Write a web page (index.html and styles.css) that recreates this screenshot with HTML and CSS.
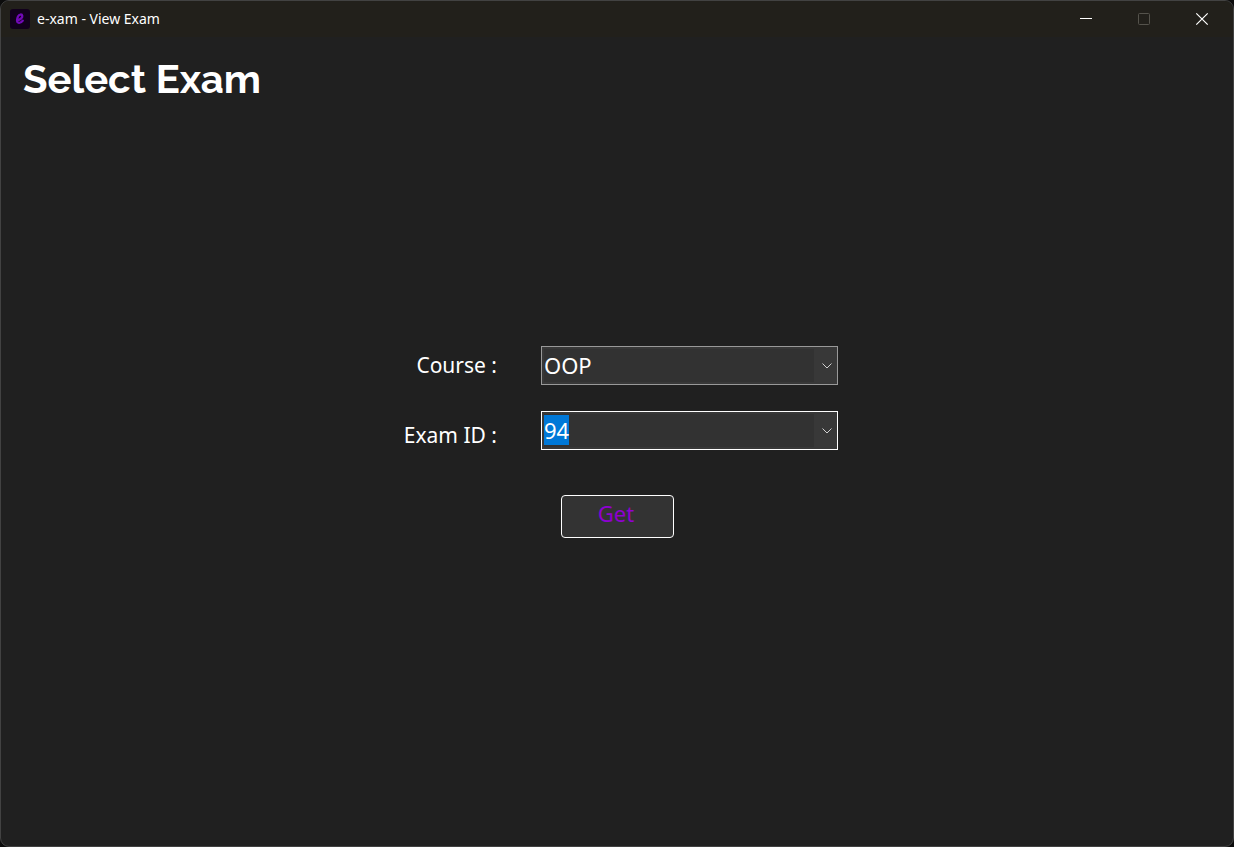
FILE: index.html
```html
<!DOCTYPE html>
<html lang="en">
<head>
<meta charset="utf-8">
<title>e-xam - View Exam</title>
<link rel="stylesheet" href="styles.css">
</head>
<body>
<div class="window">
  <header class="titlebar">
    <svg class="app-icon" viewBox="0 0 20 20" aria-hidden="true">
      <rect width="20" height="20" rx="3" fill="#12001c"/>
      <path d="M7.5 11.2C10 10.8 12.6 8.8 12.3 6.8C12 5 9.2 5 8 7.4C6.7 10 6.4 13.6 9 13.8C10.6 13.9 11.8 13 12.8 11.6" fill="none" stroke="#7209b7" stroke-width="2.3" stroke-linecap="round"/>
    </svg>
    <span class="caption">e-xam - View Exam</span>
    <button class="window-button" type="button" aria-label="Minimize">
      <svg viewBox="0 0 14 14"><path d="M1 6.5H13" stroke="#fff"/></svg>
    </button>
    <button class="window-button" type="button" aria-label="Maximize" disabled>
      <svg viewBox="0 0 14 14"><rect x="1.5" y="1.5" width="11" height="11" rx="1" fill="none" stroke="#55534c"/></svg>
    </button>
    <button class="window-button" type="button" aria-label="Close">
      <svg viewBox="0 0 14 14"><path d="M1.3 1.3L12.7 12.7M12.7 1.3L1.3 12.7" stroke="#fff" stroke-width="1.2"/></svg>
    </button>
  </header>
  <main class="content">
    <h1 class="heading">Select Exam</h1>
    <form class="exam-form">
      <label class="label" for="course">Course :</label>
      <div class="combo">
        <input class="combo-input" id="course" role="combobox" aria-expanded="false" value="OOP" autocomplete="off">
        <button class="combo-toggle" type="button" aria-label="Show courses">
          <svg viewBox="0 0 12 8"><path d="M1.5 1.5L6 6L10.5 1.5" fill="none" stroke="#d0d0d0"/></svg>
        </button>
      </div>
      <label class="label label-low" for="exam-id">Exam ID :</label>
      <div class="combo">
        <input class="combo-input" id="exam-id" role="combobox" aria-expanded="false" value="94" autocomplete="off">
        <button class="combo-toggle" type="button" aria-label="Show exam IDs">
          <svg viewBox="0 0 12 8"><path d="M1.5 1.5L6 6L10.5 1.5" fill="none" stroke="#d0d0d0"/></svg>
        </button>
      </div>
      <button class="get-button" type="button">Get</button>
    </form>
  </main>
</div>
<script src="script.js"></script>
</body>
</html>
```
FILE: styles.css
```css
* {
  box-sizing: border-box;
}

body {
  margin: 0;
  background: #0c0c0c;
  color: #fff;
  font-family: "Segoe UI", "Noto Sans", sans-serif;
}

button,
input {
  margin: 0;
  padding: 0;
  border: 0;
  font: inherit;
  color: inherit;
}

.window {
  display: flex;
  flex-direction: column;
  min-height: 100vh;
  overflow: hidden;
  border: 1px solid #424242;
  border-radius: 9px;
  background: #202020;
}

.titlebar {
  display: flex;
  align-items: center;
  height: 36px;
  padding: 0 2px 0 9px;
  background: #22201b;
}

.app-icon {
  width: 20px;
  height: 20px;
}

.caption {
  flex: 1;
  margin-left: 7px;
  font-size: 14px;
  line-height: 20px;
}

.window-button {
  display: flex;
  align-items: center;
  justify-content: center;
  width: 58px;
  height: 100%;
  background: transparent;
}

.window-button svg {
  width: 14px;
  height: 14px;
}

.content {
  display: grid;
  flex: 1;
}

.heading {
  grid-area: 1 / 1;
  align-self: start;
  margin: 0;
  padding: 18px 22px;
  font-family: Raleway, "Open Sans", sans-serif;
  font-size: 40px;
  font-weight: 700;
  line-height: 48px;
}

.exam-form {
  display: grid;
  grid-area: 1 / 1;
  grid-template-columns: 101px 297px;
  column-gap: 44px;
  row-gap: 26px;
  place-self: center;
  font-size: 22px;
  line-height: 30px;
}

.label {
  align-self: center;
  font-size: 21px;
  text-align: right;
  white-space: nowrap;
}

.label-low {
  align-self: end;
}

.combo {
  display: flex;
  height: 39px;
  padding: 2px 0 2px 2px;
  border: 1px solid #999;
  background: #383838;
}

.combo:focus-within {
  border-color: #fff;
}

.combo-input {
  flex: 1;
  min-width: 0;
  outline: 0;
  background: #323232;
}

.combo-input::selection {
  background: #0078d7;
  color: #fff;
}

.combo-toggle {
  display: flex;
  align-items: center;
  justify-content: center;
  width: 23px;
  padding: 1px 0 0 3px;
  background: transparent;
}

.combo-toggle svg {
  width: 12px;
  height: 8px;
}

.get-button {
  grid-column: 1 / -1;
  justify-self: center;
  width: 113px;
  height: 43px;
  margin-top: 19px;
  padding: 0 2px 6px 0;
  border: 1px solid #fff;
  border-radius: 4px;
  background: #333;
  color: #8f00d1;
}
```
FILE: script.js
```js
const examId = document.getElementById("exam-id");
examId.focus();
examId.select();
```
